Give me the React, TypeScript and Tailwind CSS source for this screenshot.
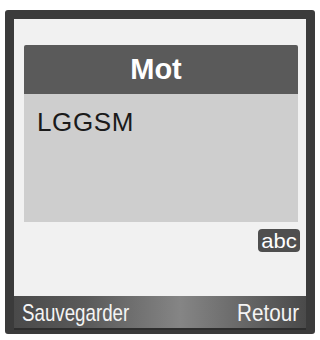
export default function App() {
  return (
    <div className="w-[320px] h-[340px] bg-white pt-[10px] pl-[5px] font-['Liberation_Sans',Arial,sans-serif]">
      {/* Phone screen frame */}
      <div className="w-[310px] h-[324px] border-[9px] border-b-[4px] border-[#3b3b3b] rounded-[3px] bg-[#f1f1f1] flex flex-col">
        {/* Dialog */}
        <div className="pt-[26px] pl-[10px] pr-[8px]">
          <div className="h-[49px] bg-[#5a5a5a] rounded-t-[2px] flex items-center justify-center pr-[10px]">
            <span className="text-white font-bold text-[29px] leading-none">Mot</span>
          </div>
          <div className="h-[128px] bg-[#cecece] pl-[13px] pt-[15px]">
            <span className="text-[#1a1a1a] text-[26px] leading-none tracking-[0.6px]">LGGSM</span>
          </div>
        </div>

        {/* Input mode badge */}
        <div className="flex justify-end pr-[6px] pt-[7px]">
          <span className="bg-[#4f4f4f] text-white text-[21px] leading-none px-[3px] pt-[1px] pb-[1px] rounded-[4px] inline-block scale-x-[1.05] origin-right">
            abc
          </span>
        </div>

        <div className="flex-1" />

        {/* Soft keys */}
        <div className="h-[34px] bg-[linear-gradient(90deg,#4a4a4a_0%,#5a5a5a_25%,#858585_57%,#5a5a5a_88%,#4a4a4a_100%)] border-b-[2px] border-[#2e2e2e] flex items-center justify-between pl-[8px] pr-[7px] pt-[2px]">
          <span className="text-[#f4f4f4] text-[24px] leading-none inline-block scale-x-[0.78] origin-left">
            Sauvegarder
          </span>
          <span className="text-[#f4f4f4] text-[24px] leading-none inline-block scale-x-[0.86] origin-right">
            Retour
          </span>
        </div>
      </div>
    </div>
  );
}
